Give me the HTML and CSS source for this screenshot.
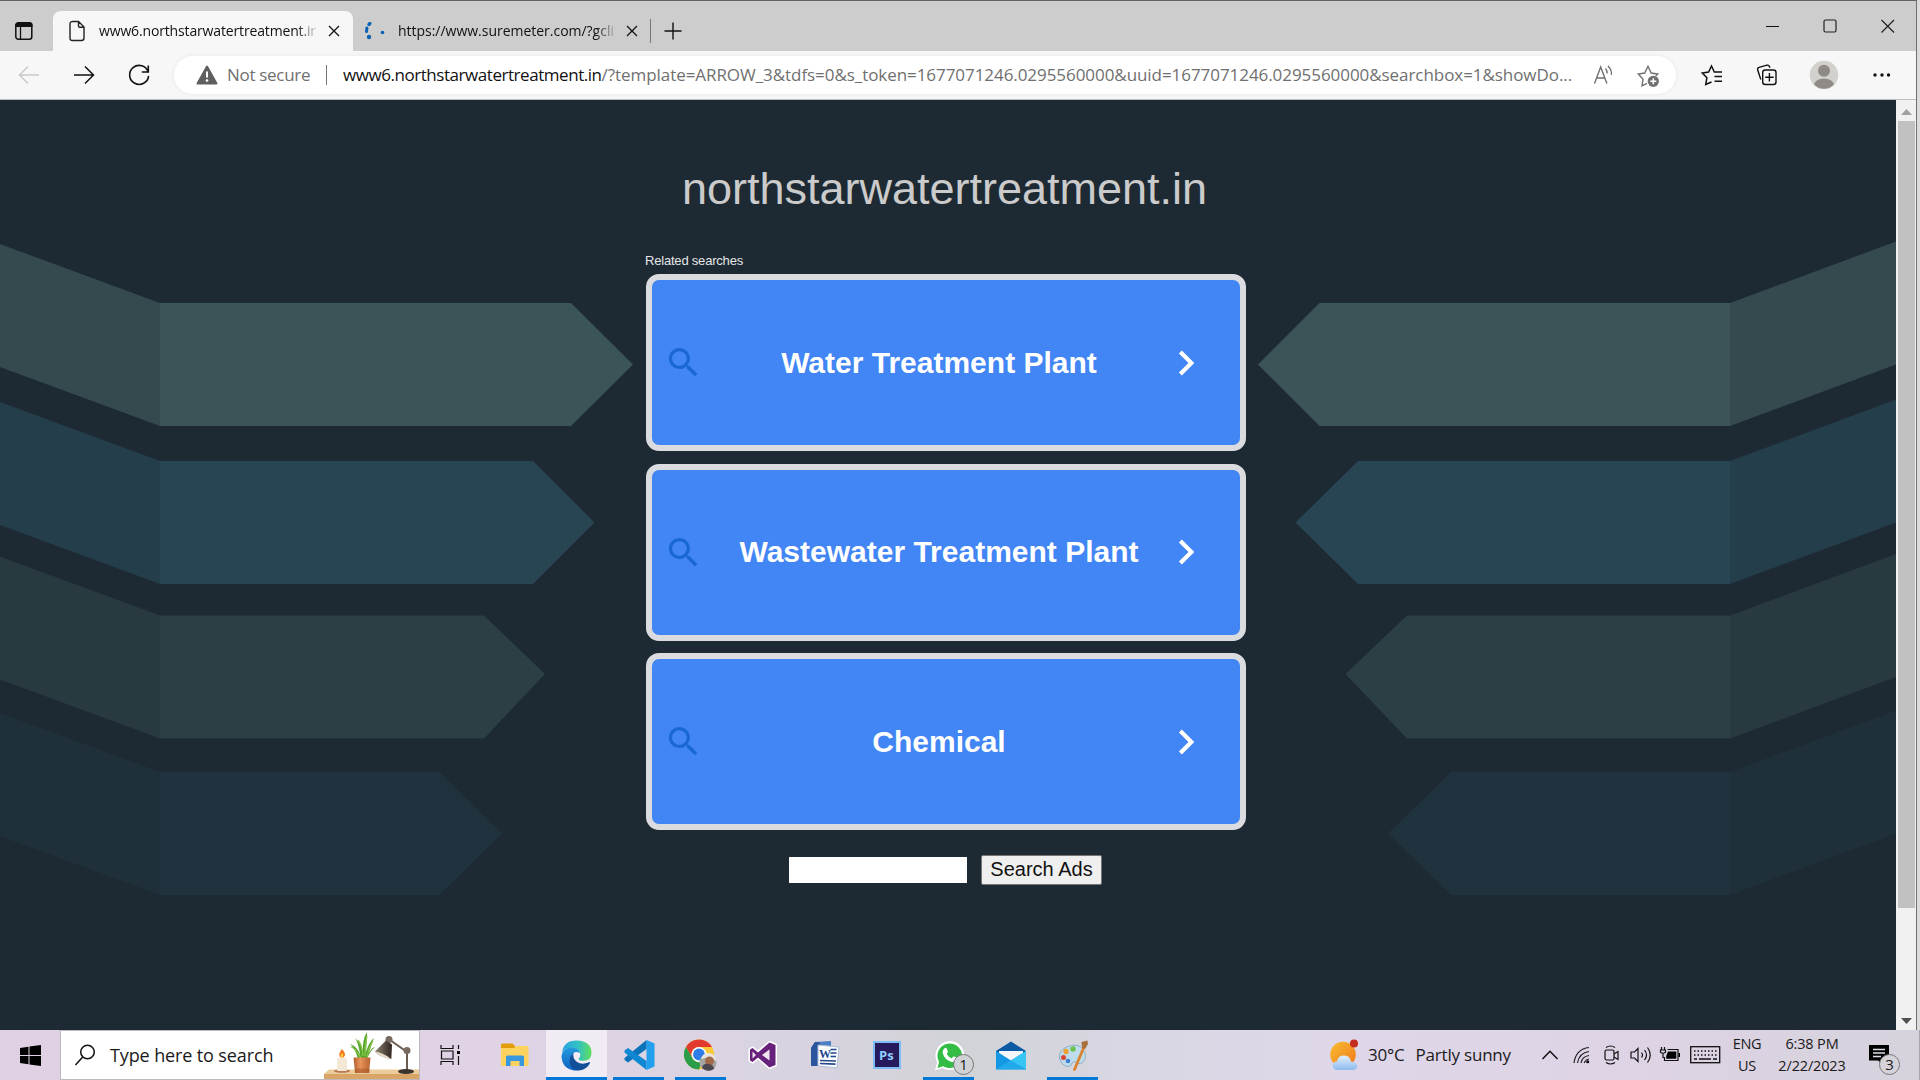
FILE: index.html
```html
<!DOCTYPE html>
<html lang="en">
<head>
<meta charset="utf-8">
<title>northstarwatertreatment.in</title>
<link rel="stylesheet" href="styles.css">
</head>
<body>
<div class="window">
  <header class="tabbar">
    <svg class="tab-actions" width="20" height="20" viewBox="0 0 20 20"><rect x="1.8" y="1.8" width="16" height="16.5" rx="2.5" fill="none" stroke="#111" stroke-width="1.5"/><path d="M1.5 6V4q0-2.500 2.500-2.500h12q2.500 0 2.500 2.500v2z" fill="#111"/><path d="M6.500 6v12" stroke="#111" stroke-width="1.300"/></svg>
    <div class="tab tab-active">
      <svg class="tab-icon" width="18" height="22" viewBox="0 0 18 22"><path d="M4 1.500h6.500l5.500 5.500v11q0 2.500-2.500 2.500h-9Q2 20.500 2 18V4q0-2.500 2.500-2.500M10.500 1.500V6q0 1.200 1.200 1.200H16" fill="none" stroke="#222" stroke-width="1.400"/></svg>
      <span class="tab-title tight">www6.northstarwatertreatment.in</span>
      <svg class="tab-close" width="12" height="12" viewBox="0 0 12 12"><path d="M1 1l10 10M11 1L1 11" stroke="#111" stroke-width="1.300"/></svg>
    </div>
    <div class="tab tab-idle">
      <svg class="tab-spinner" width="22" height="18" viewBox="0 0 22 18"><path d="M5.800 1.500L5 2.500" stroke="#0a62b4" stroke-width="3.400" stroke-linecap="round"/><path d="M2.900 6L2.500 9.500" stroke="#0a62b4" stroke-width="3" stroke-linecap="round"/><circle cx="5" cy="15" r="2.200" fill="#0a62b4"/><circle cx="18.500" cy="10.500" r="1.800" fill="#0a62b4"/></svg>
      <span class="tab-title">https://www.suremeter.com/?gcli</span>
      <svg class="tab-close" width="12" height="12" viewBox="0 0 12 12"><path d="M1 1l10 10M11 1L1 11" stroke="#111" stroke-width="1.300"/></svg>
    </div>
    <svg class="tab-new" width="18" height="18" viewBox="0 0 18 18"><path d="M9 .5v17M.5 9h17" stroke="#111" stroke-width="1.400"/></svg>
    <div class="window-controls">
      <svg width="20" height="20" viewBox="0 0 20 20"><path d="M4 10.500h13" stroke="#111"/></svg>
      <svg width="20" height="20" viewBox="0 0 20 20"><rect x="4" y="4" width="12" height="12" rx="1.500" fill="none" stroke="#222" stroke-width="1.200"/></svg>
      <svg width="20" height="20" viewBox="0 0 20 20"><path d="M3.500 4l12.500 12.500M16 4L3.500 16.500" stroke="#222" stroke-width="1.200"/></svg>
    </div>
  </header>

  <nav class="toolbar">
    <svg class="nav-back" width="28" height="28" viewBox="0 0 28 28"><path d="M24 14H4.500M13 5.500L4.500 14l8.500 8.500" fill="none" stroke="#c9c9c9" stroke-width="1.500"/></svg>
    <svg class="nav-forward" width="28" height="28" viewBox="0 0 28 28"><path d="M4 14h19.500M15 5.500l8.500 8.500-8.500 8.500" fill="none" stroke="#111" stroke-width="1.500"/></svg>
    <svg class="nav-reload" width="28" height="28" viewBox="0 0 28 28"><path d="M23.200 11a9.500 9.500 0 1 0 .4 3.800M23.300 4.500V11h-6.500" fill="none" stroke="#111" stroke-width="1.600"/></svg>
    <div class="address">
      <svg width="22" height="20" viewBox="0 0 22 20"><path d="M11 1.500l9.500 17h-19z" fill="#5f5f5f" stroke="#5f5f5f" stroke-width="2" stroke-linejoin="round"/><path d="M11 6.500v6" stroke="#fff" stroke-width="2"/><circle cx="11" cy="15.500" r="1.300" fill="#fff"/></svg>
      <span class="secure">Not secure</span>
      <span class="divider"></span>
      <span class="url"><span class="url-host">www6.northstarwatertreatment.in</span>/?template=ARROW_3&amp;tdfs=0&amp;s_token=1677071246.0295560000&amp;uuid=1677071246.0295560000&amp;searchbox=1&amp;showDo...</span>
      <svg class="read-aloud" width="28" height="28" viewBox="0 0 28 28"><path d="M4.500 22.500L10.700 6l6.200 16.500M6.700 17h8" fill="none" stroke="#707070" stroke-width="1.400"/><path d="M15.500 7.500q2 2.500 1.600 5M18 5q4 4 3.400 9" fill="none" stroke="#707070" stroke-width="1.300"/></svg>
      <svg class="add-star" width="28" height="28" viewBox="0 0 28 28"><path d="M12 22.300l-5 2.500 1-6.500L3.300 13l6.400-1L13 5.300l3.200 6.700 6.500 1-2 2" fill="none" stroke="#707070" stroke-width="1.400"/><circle cx="18.300" cy="20.300" r="5.600" fill="#707070"/><path d="M18.300 17.300v6M15.300 20.300h6" stroke="#fff" stroke-width="1.500"/></svg>
    </div>
    <svg class="favorites" width="28" height="28" viewBox="0 0 28 28"><path d="M13.500 21L7.700 23.500l1.200-6.700L4.300 12l6.300-1L13.500 5l2.800 6h7.700M16.500 15.500H24M16.500 20.300H24" fill="none" stroke="#111" stroke-width="1.500"/></svg>
    <svg class="collections" width="28" height="28" viewBox="0 0 28 28"><rect x="9.700" y="9" width="13.300" height="14.500" rx="2.500" fill="none" stroke="#111" stroke-width="1.400"/><path d="M7.800 18.500L4.700 9Q4.200 7 6 6.400l8-2.200q2-.4 2.500 1.600l.5 1M16.400 12v8.500M12.200 16.300h8.500" fill="none" stroke="#111" stroke-width="1.400"/></svg>
    <svg class="avatar" width="30" height="30" viewBox="0 0 30 30"><circle cx="15" cy="15" r="14.300" fill="#d3d1ce"/><circle cx="15" cy="10.800" r="6" fill="#8f8a86"/><path d="M5 24.500Q7 18.500 15 18.500t10 6A14 14 0 0 1 5 24.500" fill="#8f8a86"/></svg>
    <svg class="more" width="28" height="28" viewBox="0 0 28 28"><g fill="#111"><circle cx="7" cy="14" r="1.700"/><circle cx="14" cy="14" r="1.700"/><circle cx="20.500" cy="14" r="1.700"/></g></svg>
  </nav>

  <div class="viewport">
    <main class="page">
      <svg class="arrows" width="1896" height="930" viewBox="0 100 1896 930">
        <path fill="#354a4e" d="M0 244l160 59v123L0 367zM1896 241.500L1730 303v123l166-61.500z"/>
        <path fill="#3b5458" d="M160 303h411l62 61.500-62 61.500H160zM1730 303h-410.500L1258 364.500l61.500 61.500H1730z"/>
        <path fill="#253e4b" d="M0 402l160 59v123L0 525zM1896 399.500L1730 461v123l166-61.500z"/>
        <path fill="#284553" d="M160 461h373l61.500 61.500L533 584H160zM1730 461h-372l-62.500 61.500L1358 584h372z"/>
        <path fill="#28393f" d="M0 556.500l160 59V738.500L0 679.500zM1896 554l-166 61.500V738.500l166-61.500z"/>
        <path fill="#2c3f45" d="M160 615.500h324l61 58.500-61 64.500H160zM1730 615.500h-323l-61.500 58.500 61.500 64.500h323z"/>
        <path fill="#1f303a" d="M0 713l160 59v123L0 836zM1896 710.500L1730 772v123l166-61.500z"/>
        <path fill="#20323e" d="M160 772h279.500l62.500 61.500-62.500 61.500H160zM1730 772h-279l-63 61.500 63 61.500h279z"/>
      </svg>
      <section class="content">
        <h1 class="domain">northstarwatertreatment.in</h1>
        <p class="related">Related searches</p>
        <div class="cards">
          <a class="card">
            <svg width="39" height="39" viewBox="0 0 24 24"><path fill="#1967d2" d="M15.500 14h-.79l-.28-.27A6.471 6.471 0 0 0 16 9.500 6.500 6.500 0 1 0 9.500 16c1.610 0 3.090-.59 4.230-1.570l.27.280v.79l5 4.990L20.490 19l-4.990-5zm-6 0C7.010 14 5 11.990 5 9.500S7.010 5 9.500 5 14 7.010 14 9.500 11.990 14 9.500 14z"/></svg>
            <span class="card-label">Water Treatment Plant</span>
            <svg width="50" height="50" viewBox="0 0 24 24"><path fill="#fff" d="M10 6L8.590 7.410 13.170 12l-4.580 4.590L10 18l6-6z"/></svg>
          </a>
          <a class="card">
            <svg width="39" height="39" viewBox="0 0 24 24"><path fill="#1967d2" d="M15.500 14h-.79l-.28-.27A6.471 6.471 0 0 0 16 9.500 6.500 6.500 0 1 0 9.500 16c1.610 0 3.090-.59 4.230-1.570l.27.280v.79l5 4.990L20.490 19l-4.990-5zm-6 0C7.010 14 5 11.990 5 9.500S7.010 5 9.500 5 14 7.010 14 9.500 11.990 14 9.500 14z"/></svg>
            <span class="card-label">Wastewater Treatment Plant</span>
            <svg width="50" height="50" viewBox="0 0 24 24"><path fill="#fff" d="M10 6L8.590 7.410 13.170 12l-4.580 4.590L10 18l6-6z"/></svg>
          </a>
          <a class="card">
            <svg width="39" height="39" viewBox="0 0 24 24"><path fill="#1967d2" d="M15.500 14h-.79l-.28-.27A6.471 6.471 0 0 0 16 9.500 6.500 6.500 0 1 0 9.500 16c1.610 0 3.090-.59 4.230-1.570l.27.280v.79l5 4.990L20.490 19l-4.990-5zm-6 0C7.010 14 5 11.990 5 9.500S7.010 5 9.500 5 14 7.010 14 9.500 11.990 14 9.500 14z"/></svg>
            <span class="card-label">Chemical</span>
            <svg width="50" height="50" viewBox="0 0 24 24"><path fill="#fff" d="M10 6L8.590 7.410 13.170 12l-4.580 4.590L10 18l6-6z"/></svg>
          </a>
        </div>
        <form class="search-form">
          <input class="search-input" type="text">
          <button class="search-button" type="button">Search Ads</button>
        </form>
      </section>
    </main>
    <div class="scrollbar">
      <svg width="11" height="6" viewBox="0 0 11 6"><path d="M5.500 0L11 6H0z" fill="#a0a0a0"/></svg>
      <div class="thumb"></div>
      <svg class="scroll-down" width="11" height="6" viewBox="0 0 11 6"><path d="M0 0h11L5.500 6z" fill="#505050"/></svg>
    </div>
  </div>
</div>

<footer class="taskbar">
  <div class="start"><svg width="21" height="21" viewBox="0 0 21 21"><path d="M0 3l8.500-1.200V10H0zM9.500 1.600L21 0v10H9.500zM0 11h8.500v8.300L0 18zM9.500 11H21v10L9.500 19.400z"/></svg></div>
  <div class="searchbox">
    <svg class="lens" width="22" height="22" viewBox="0 0 22 22"><circle cx="13.500" cy="8" r="6.800" fill="none" stroke="#111" stroke-width="1.500"/><path d="M8.700 13L1.500 21" stroke="#111" stroke-width="1.500"/></svg>
    <span class="search-hint">Type here to search</span>
    <svg class="scene" width="95" height="48" viewBox="0 0 95 48">
      <defs>
        <linearGradient id="pot"><stop offset="0" stop-color="#b05f2c"/><stop offset=".4" stop-color="#e8935a"/><stop offset="1" stop-color="#b8622f"/></linearGradient>
        <linearGradient id="shade"><stop offset="0" stop-color="#8d8272"/><stop offset="1" stop-color="#2e261f"/></linearGradient>
      </defs>
      <path d="M0 43l5-4.500h90V43z" fill="#eccb9a"/><path d="M0 43h95v5H0z" fill="#d9a566"/>
      <ellipse cx="18" cy="40" rx="8" ry="1.800" fill="#b87a50"/><rect x="13" y="27" width="10" height="13" rx="1" fill="#f3e8d5"/><path d="M18 18q5 5 1.500 8.500h-3Q13.500 23 18 18" fill="#f47b20"/><path d="M18 22q2 2 .5 4.500h-1q-1.500-2 .5-4.500" fill="#ffcf3f"/>
      <path d="M34 28q-3-11-8-15 8 3 10 11-1-11-5-17 8 7 8 16Q38 8 43 1q0 9-1 20 3-10 8-14-3 8-5 15 3-6 6-6-5 4-8 12z" fill="#58a62f"/><path d="M37 27Q31 17 27 16M39 25q-1-12-5-16M41 25q0-11 2-20M43 26q2-10 6-16" stroke="#8bc94b" fill="none" stroke-width="1.200"/>
      <path d="M29.500 26.500h17L45 42H31z" fill="url(#pot)"/><path d="M31 37.500h14.500V42H31z" fill="#a95a2a" opacity=".6"/>
      <path d="M66 9l17 12v20" fill="none" stroke="#6b5c50" stroke-width="2"/><ellipse cx="82" cy="40.500" rx="8" ry="2.500" fill="#3b332d"/><circle cx="65" cy="8.500" r="3.500" fill="#776a60"/><circle cx="83" cy="19.500" r="3.500" fill="#776a60"/>
      <path d="M62 9.500l6 4-.7 14.500Q55 26 51 20.500z" fill="url(#shade)"/><path d="M51 20.500Q58 21 67.300 28 57 27 51 20.500" fill="#e8dcc8"/>
    </svg>
  </div>
  <div class="apps">
    <div class="app app-view"><svg width="21" height="20" viewBox="0 0 21 20"><path d="M1 0v3.500h12V0M1 20v-3.500h12V20M1.500 6h11.500v8H1.500zM18.500 0v4M18.500 11v9" fill="none" stroke="#111" stroke-width="1.200"/><rect x="17" y="6" width="3" height="3"/></svg></div>
    <div class="app"><svg width="28" height="24" viewBox="0 0 28 24"><path d="M0 2q0-1.500 1.500-1.500h10L14 3v3H0z" fill="#e29d08"/><path d="M0 5h13l2-2h11q1.500 0 1.500 1.500V22q0 1-1 1H1q-1 0-1-1z" fill="#fed25f"/><path d="M5 23v-9q0-1.500 1.500-1.500h15Q23 12.500 23 14v9h-4.500v-5h-9v5z" fill="#3997e0"/></svg></div>
    <div class="app running current"><svg width="31" height="31" viewBox="0 0 31 31">
      <defs><linearGradient id="edge-top"><stop offset="0" stop-color="#2aa3e0"/><stop offset=".55" stop-color="#33c1c4"/><stop offset="1" stop-color="#5fe05a"/></linearGradient><linearGradient id="edge-side" x2="0" y2="1"><stop offset="0" stop-color="#249be0"/><stop offset="1" stop-color="#0f62c0"/></linearGradient></defs>
      <path d="M1 12Q3 .5 15.500.5 30.500 1 30.500 13q0 7.500-8 7.800-5 .2-4.800-2.300 1.800-1.500 1.600-4Q18 8 11 8 4 8 1 12" fill="url(#edge-top)"/><path d="M.5 16Q1 8 10.500 7.500q7 .2 8.500 5.500-7-3-8 4-.5 8 7 13-2 .7-5 .5Q1 28.500.5 16" fill="url(#edge-side)"/><path d="M12.500 13Q7 18 9 24t9 6.500q8-1 11-7.500.3-1.200-1-.8-7 3-12-.2-5-4-3.500-9" fill="#114f98"/></svg></div>
    <div class="app running"><svg width="31" height="30" viewBox="0 0 31 30"><path d="M22.500 0L30.500 3.500v23L22.500 30z" fill="#22a0ee"/><path d="M22.500 0v9L4 22.500 .5 20v-2z" fill="#0a73ba"/><path d="M22.500 30v-9L4 8 .5 10.500v2z" fill="#0e88d3"/></svg></div>
    <div class="app running"><svg class="chrome" width="34" height="33" viewBox="0 0 34 33"><circle cx="15" cy="15.500" r="15" fill="#fcc934"/><path d="M2 8A15 15 0 0 1 28 8H15a7.500 7.500 0 0 0-6.600 11z" fill="#e23a2f"/><path d="M2 8l6.500 11.300A7.500 7.500 0 0 0 18 22.500l-3 8A15 15 0 0 1 2 8" fill="#2b9c4a"/><circle cx="15" cy="15.500" r="7.500" fill="#fff"/><circle cx="15" cy="15.500" r="5.900" fill="#2f7de8"/><circle cx="24" cy="23.500" r="8.500" fill="#a3a7a0"/><path d="M17 20q2-7 8-6 7 1 7 8l-7-4z" fill="#e8e5e0"/><circle cx="25.500" cy="22" r="4.500" fill="#a36a4c"/><path d="M18 29q1-5 7-4 5 1 5 5-6 4-12-1" fill="#4c4650"/></svg></div>
    <div class="app"><svg width="30" height="30" viewBox="0 0 30 30"><g fill="#68217a" stroke="#fff" stroke-width="3" stroke-linejoin="round"><path d="M21.500 2.500l6 2.500v20l-6 2.500L10 17.500 4.500 22 2 20.500v-11L4.500 8l5.500 4.500z"/></g><path d="M21.500 2.500l6 2.500v20l-6 2.500L10 17.500 4.500 22 2 20.500v-11L4.500 8l5.500 4.500z" fill="#68217a"/><path d="M21.500 9.500v11L14 15zM4.500 11.500v7L8 15z" fill="#efe6f2"/></svg></div>
    <div class="app"><svg width="30" height="30" viewBox="0 0 30 30"><path d="M5 2l16-1v25H1V8z" fill="#4b7fc6"/><path d="M1 8l4-6 5 .5V26H1z" fill="#2b559d"/><path d="M8 5l21 2-2 21-19-2z" fill="#fbfdff" stroke="#a9bcd8"/><text x="9" y="18" class="word-mark">W</text><path d="M20.500 9.500h6M20.500 13h6M20.500 16.500h5.500M10 20.500l16 .5M10 23.500l15.500.7" stroke="#26468b" stroke-width="1.700"/></svg></div>
    <div class="app"><svg width="28" height="28" viewBox="0 0 28 28"><rect width="28" height="28" fill="#7dbcf5"/><rect x="2" y="2" width="24" height="24" fill="#261a5c"/><text x="6" y="18.500" class="ps-mark">Ps</text></svg></div>
    <div class="app running"><svg width="31" height="31" viewBox="0 0 31 31"><path d="M1 30.500l2.200-8A14.500 14.500 0 1 1 8.500 28z" fill="#fff"/><path d="M3.500 28l1.600-6A12.300 12.300 0 1 1 9.300 26.300z" fill="#33bd45"/><path d="M10.500 8.300q1.300-1 2.200.2l1.200 3q.1.900-1.200 2.200 1.800 3.500 5 4.700l1.500-1.800q.6-.6 3.600 1.200.7.400.3 1.700-1.500 3-5 2.500-8-2.200-9.500-9.500-.1-2.500 1.900-4.200" fill="#fff"/></svg><span class="badge">1</span></div>
    <div class="app"><svg width="30" height="29" viewBox="0 0 30 29"><path d="M0 10L15 .5 30 10v4H0z" fill="#0c59a4"/><path d="M3 10h24v6l-12 8-12-7z" fill="#f3f7fb"/><path d="M0 10l15 9.500L30 10v18.500H0z" fill="#1598e4"/><path d="M30 10v18.500L15 19.500z" fill="#35c6f4"/><path d="M0 28.500h30L15 19.500 30 10" fill="#29b5f0" opacity=".6"/></svg></div>
    <div class="app running"><svg width="31" height="31" viewBox="0 0 31 31"><path d="M1.500 19Q0 10 10 6.500 20 3 25 9q5 8 0 13-3 3-5 1-4-3-6 0-1 5-7 3-4-2-5.500-7.500" fill="#bfdcec" stroke="#7fa5bd" stroke-width=".8"/><circle cx="8" cy="11.500" r="2.700" fill="#f0a030"/><circle cx="15" cy="9" r="2.700" fill="#6cc24a"/><circle cx="5.500" cy="17.500" r="2.500" fill="#d94333"/><circle cx="10" cy="21" r="2.300" fill="#3e7fd0"/><path d="M26 7L16.500 29.500" stroke="#d98432" stroke-width="2.800" stroke-linecap="round"/><path d="M23.500 2l6-1.500L30 4l-3 5-3-1.500z" fill="#a9713d"/></svg></div>
  </div>
  <div class="weather">
    <svg width="30" height="32" viewBox="0 0 30 32"><defs><linearGradient id="sun" x2="1" y2="1"><stop offset="0" stop-color="#f8bf31"/><stop offset="1" stop-color="#f0761c"/></linearGradient><linearGradient id="cloud" x2="0" y2="1"><stop offset="0" stop-color="#e3f0fd"/><stop offset="1" stop-color="#8db9ee"/></linearGradient></defs><circle cx="14" cy="15.500" r="12.800" fill="url(#sun)"/><path d="M9 31q-5 0-5.500-4.500.5-4 4.500-4.300 1-5.700 7-5.700t7 6q6 .5 6.500 4.500-.5 4-5.500 4z" fill="url(#cloud)"/><circle cx="25" cy="4.500" r="4" fill="#c42b1c"/></svg>
    <span class="temp">30°C</span><span>Partly sunny</span>
  </div>
  <div class="tray">
    <svg class="t-up" width="18" height="20" viewBox="0 0 18 20"><path d="M1.500 14L9 6.300l7.500 7.700" fill="none" stroke="#111" stroke-width="1.500"/></svg>
    <svg class="t-wifi" width="18" height="20" viewBox="0 0 18 20"><g fill="none" stroke="#222" stroke-width="1.200"><path d="M1 18Q3 4 16 2.500"/><path d="M4.500 18Q6 8 16 6.500"/><path d="M8 18q1-6.500 8-7.500"/><path d="M11.300 18q1-3.500 4.700-4"/></g><circle cx="14.700" cy="16.800" r="1.500"/></svg>
    <svg class="t-cam" width="16" height="20" viewBox="0 0 16 20"><g fill="none" stroke="#111" stroke-width="1.200"><rect x="1" y="5" width="9" height="10" rx="1.500"/><path d="M10 9l4-2.500v8L10 12M2 2.500q4.500-3 9 0M2 17.500q4.500 3 9 0"/></g></svg>
    <svg class="t-sound" width="22" height="20" viewBox="0 0 22 20"><g fill="none" stroke="#111" stroke-width="1.200"><path d="M1 7h3.500L8 3.500v13L4.500 13H1zM11.500 7.500q2 2.500 0 5M14.500 5q4 5 0 10M17.500 2.500q5.500 7.500 0 15"/></g></svg>
    <svg class="t-power" width="22" height="20" viewBox="0 0 22 20"><path d="M8.500 4.500H19v11H5.500V12.500" fill="none" stroke="#111" stroke-width="1.200"/><path d="M19.500 8h1.500v4h-1.500zM9 6.500h8.300v7.200H7.200V11z"/><path d="M2.500 2v2.500M5.500 2v2.500M1.500 5h5v2.300q-2.500 2-5 0zM4 8.500v4h2" fill="none" stroke="#111" stroke-width="1.200"/></svg>
    <svg class="t-keys" width="31" height="20" viewBox="0 0 31 20"><rect x=".7" y="1.700" width="29" height="16" fill="none" stroke="#111" stroke-width="1.300"/><path d="M4 6h22.500M4 10h22.500" stroke="#111" stroke-width="1.400" stroke-dasharray="1.500 2"/><path d="M4 14h3M9 14h12M23 14h4" stroke="#111" stroke-width="1.400"/></svg>
    <div class="lang"><span>ENG</span><span>US</span></div>
    <div class="clock"><span>6:38 PM</span><span>2/22/2023</span></div>
    <div class="notify"><svg width="20" height="20" viewBox="0 0 20 20"><path d="M0 0h20v15.500h-7V19l-4-3.500H0z"/><path d="M4 4.500h12M4 8h12M4 11.500h8" stroke="#e0d9e6" stroke-width="1.300"/></svg><span class="badge badge-notify">3</span></div>
  </div>
</footer>
</body>
</html>
```
FILE: styles.css
```css
* { box-sizing: border-box; }
body {
  margin: 0;
  width: 1920px;
  height: 1080px;
  overflow: hidden;
  background: #dcdcdc;
  font-family: "Open Sans", "Noto Sans", sans-serif;
  color: #1a1a1a;
}
svg { display: block; flex: none; }

/* Browser window */
.window {
  width: 1917px;
  height: 1030px;
  border-top: 1px solid #636363;
  border-right: 1px solid #707070;
}
.tabbar {
  display: flex;
  height: 50px;
  padding: 10px 18px 0 14px;
  background: #cdcdcd;
  font-size: 14px;
  color: #111;
}
.tab-actions { margin: 10px 19px 0 0; }
.tab { display: flex; align-items: center; height: 40px; }
.tab-active {
  width: 300px;
  padding-left: 15px;
  background: #f7f7f7;
  border-radius: 8px 8px 0 0;
}
.tab-icon { margin-right: 13px; }
.tab-title {
  width: 217px;
  margin-right: 12px;
  overflow: hidden;
  white-space: nowrap;
  line-height: 24px;
  -webkit-mask-image: linear-gradient(90deg, #000 91%, rgba(0, 0, 0, 0.15));
  mask-image: linear-gradient(90deg, #000 91%, rgba(0, 0, 0, 0.15));
}
.tight { letter-spacing: -0.15px; }
.tab-idle { width: 298px; padding-left: 11px; }
.tab-idle .tab-title { margin-right: 11px; letter-spacing: -0.02px; }
.tab-idle::after {
  content: "";
  width: 1px;
  height: 24px;
  margin-left: 12px;
  background: #777;
}
.tab-spinner { margin-right: 12px; }
.tab-new { margin: 11px 0 0 13px; }
.window-controls { display: flex; gap: 38px; margin: 5px 0 0 auto; }

.toolbar {
  display: flex;
  align-items: center;
  height: 49px;
  padding-left: 15px;
  background: #f7f7f7;
  border-bottom: 1px solid #b9bec0;
}
.nav-forward { margin-left: 27px; }
.nav-reload { margin: 0 21px 0 27px; }
.address {
  display: flex;
  align-items: center;
  width: 1502px;
  height: 38px;
  padding: 0 13px 0 22px;
  border-radius: 19px;
  background: #fff;
  box-shadow: 0 0 4px #e6e6e6;
  font-size: 17px;
  line-height: 24px;
  color: #707070;
  white-space: nowrap;
}
.secure { width: 108px; padding-left: 9px; letter-spacing: -0.3px; }
.divider { width: 1px; height: 20px; background: #767676; }
.url { width: 1230px; margin-left: 16px; letter-spacing: -0.06px; }
.url-host { color: #111; letter-spacing: -0.45px; }
.read-aloud { margin-left: 17px; }
.add-star { margin-left: auto; }
.favorites { margin-left: 22px; }
.collections { margin-left: 27px; }
.avatar { margin-left: 28px; }
.more { margin-left: 29px; }

/* Page */
.viewport { display: flex; height: 930px; }
.page {
  position: relative;
  width: 1896px;
  background: #1e2a33;
  font-family: "Liberation Sans", Arial, sans-serif;
}
.arrows { position: absolute; left: 0; top: 0; }
.content {
  position: relative;
  width: 600px;
  margin-left: 646px;
  padding-top: 63px;
}
.domain {
  margin: 0;
  padding-right: 3px;
  font-size: 45px;
  font-weight: 400;
  line-height: 52px;
  text-align: center;
  color: #cbcbcb;
}
.related {
  margin: 38px 0 5px -1px;
  font-size: 13px;
  line-height: 16px;
  letter-spacing: -0.2px;
  color: #e4e6e8;
}
.cards { display: grid; gap: 12.5px; }
.card {
  display: flex;
  align-items: center;
  height: 177px;
  padding: 0 29px 0 12px;
  border: 6px solid #dadce0;
  border-radius: 13px;
  background: #4285f4;
}
.card-label {
  flex: 1;
  padding-left: 14px;
  font-size: 30px;
  font-weight: 700;
  line-height: 36px;
  text-align: center;
  color: #fff;
}
.search-form { display: flex; align-items: center; margin: 25px 0 0 143px; gap: 14px; }
.search-input { width: 178px; height: 26px; border: 0; padding: 0; background: #fff; }
.search-button {
  width: 121px;
  height: 30px;
  padding: 0 0 2px;
  border: 1px solid #767676;
  border-radius: 2px;
  background: #efefef;
  color: #111;
  font: 20px "Liberation Sans", Arial, sans-serif;
}

.scrollbar {
  display: flex;
  flex-direction: column;
  align-items: center;
  width: 20px;
  padding: 9px 0 6px;
  background: #f1f1f1;
}
.thumb { width: 17px; height: 787px; margin-top: 6px; background: #c1c1c1; }
.scroll-down { margin-top: auto; }

/* Taskbar */
.taskbar {
  display: flex;
  height: 50px;
  background: linear-gradient(90deg, #e0d0e3 0, #dfd3e5 500px, #d9d3e0 800px, #d1d3d7 960px, #d9d7e3 1140px, #dfd7e9 1350px, #ddd3e4 1650px, #d6d2dc 1920px);
}
.start { width: 60px; padding: 15px 0 0 20px; }
.searchbox {
  display: flex;
  align-items: center;
  width: 360px;
  height: 50px;
  border: 1px solid #bdb9c0;
  background: #fff;
  font-size: 18px;
  letter-spacing: -0.12px;
}
.lens { margin-left: 13px; }
.search-hint { margin-left: 14px; line-height: 24px; white-space: nowrap; }
.scene { margin-left: auto; }
.apps { display: flex; margin-left: 2px; }
.app {
  position: relative;
  display: flex;
  align-items: center;
  justify-content: center;
  width: 62px;
  height: 50px;
}
.app-view { padding-right: 5px; }
.running::after {
  content: "";
  position: absolute;
  left: 5px;
  bottom: 0;
  width: 51px;
  height: 3px;
  background: #0078d7;
}
.current { width: 61px; margin-right: 1px; background: #f1ecf4; }
.current::after { left: 0; width: 61px; }
.word-mark { font: 700 12px "Liberation Serif", serif; fill: #26468b; }
.ps-mark { font: 700 13px "Open Sans", sans-serif; fill: #8fcbfb; }
.badge {
  position: absolute;
  left: 35px;
  top: 24px;
  width: 21px;
  height: 21px;
  border: 1px solid #777;
  border-radius: 50%;
  background: #d0d3d5;
  font-size: 15px;
  line-height: 19px;
  text-align: center;
}
.weather {
  display: flex;
  align-items: center;
  margin-left: 225px;
  font-size: 17px;
  letter-spacing: -0.2px;
  line-height: 24px;
  white-space: nowrap;
}
.temp { width: 47.500px; margin-left: 9px; }
.tray { display: flex; align-items: center; margin-left: auto; height: 50px; width: 379px; }
.t-wifi { margin-left: 14px; }
.t-cam { margin-left: 13px; }
.t-sound { margin-left: 10px; }
.t-power { margin-left: 7px; }
.t-keys { margin-left: 9px; }
.lang, .clock {
  display: flex;
  flex-direction: column;
  text-align: center;
  font-size: 14.500px;
  line-height: 22px;
  letter-spacing: -0.3px;
}
.lang { width: 32px; margin-left: 10px; }
.clock { width: 72px; margin-left: 13px; letter-spacing: -0.15px; }
.notify { position: relative; width: 51px; height: 50px; margin-left: 21px; padding-top: 15px; border-right: 1px solid #aaa6b0; }
.badge-notify { left: 10px; background: #d5d2d9; }
```
